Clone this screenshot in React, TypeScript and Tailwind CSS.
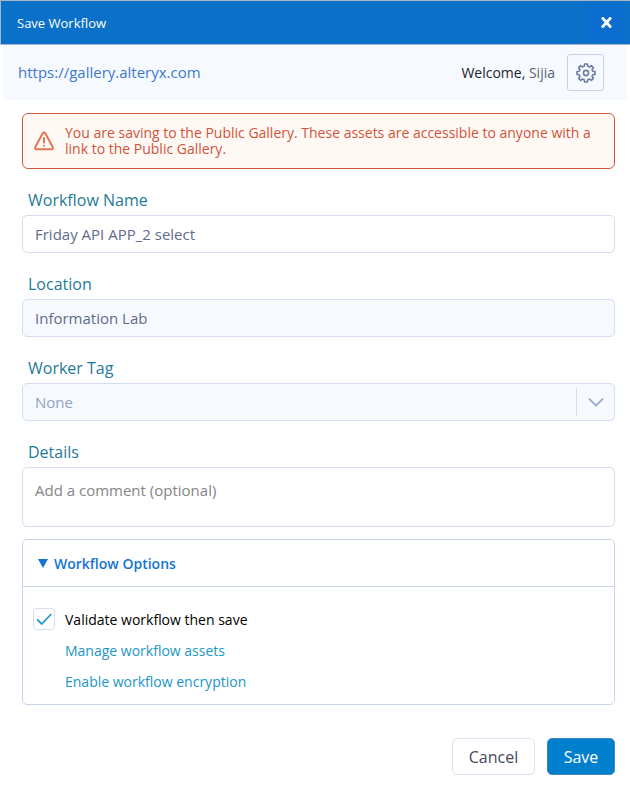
import React, { useState } from "react";

const labelClass = "block pl-1.5 text-[16px] leading-5 text-[#1f7a99]";
const fieldClass =
  "block w-full rounded-[5px] border border-[#d5def0] px-3 text-[15px] outline-none";

// eight rounded teeth around the centre of a 24px box
const gearPoints = Array.from({ length: 8 }, (_, i) =>
  [
    [-15, 7.6],
    [-9, 9.9],
    [9, 9.9],
    [15, 7.6],
  ]
    .map(([angle, radius]) => {
      const a = ((i * 45 + angle) * Math.PI) / 180;
      return `${12 + radius * Math.sin(a)},${12 - radius * Math.cos(a)}`;
    })
    .join(" ")
).join(" ");

const GearIcon: React.FC = () => (
  <svg
    className="size-[22px]"
    viewBox="0 0 24 24"
    fill="none"
    stroke="currentColor"
    strokeWidth="1.8"
    strokeLinejoin="round"
    aria-hidden="true"
  >
    <polygon points={gearPoints} />
    <circle cx="12" cy="12" r="2.8" />
  </svg>
);

const WarningIcon: React.FC = () => (
  <svg
    className="size-[22px] shrink-0 text-[#e4754f]"
    viewBox="0 0 22 22"
    fill="none"
    stroke="currentColor"
    strokeWidth="2"
    strokeLinecap="round"
    strokeLinejoin="round"
    aria-hidden="true"
  >
    <path d="M9.7 3.2 2.2 17.2a1.4 1.4 0 0 0 1.2 2.1h15.2a1.4 1.4 0 0 0 1.2-2.1L12.3 3.2a1.5 1.5 0 0 0-2.6 0Z" />
    <path d="M11 8v4.5M11 15.7v.1" />
  </svg>
);

const App: React.FC = () => {
  const [name, setName] = useState("Friday API APP_2 select");
  const [comment, setComment] = useState("");
  const [validate, setValidate] = useState(true);

  return (
    <div className="min-h-screen bg-white font-['Open_Sans','Noto_Sans',sans-serif]">
      <header className="flex h-[45px] items-center justify-between border border-r-0 border-[#a3b5c6] bg-[#0b70c7] pr-1.5 pl-4 text-white">
        <h1 className="text-[13px] leading-5">Save Workflow</h1>
        <button
          type="button"
          aria-label="Close"
          className="flex h-9 w-9 items-center justify-center bg-[#0b6dd0]"
        >
          <svg
            className="size-[11px]"
            viewBox="0 0 11 11"
            stroke="currentColor"
            strokeWidth="2.8"
            aria-hidden="true"
          >
            <path d="M1 0.5 10 10.5M10 0.5 1 10.5" />
          </svg>
        </button>
      </header>

      <div className="mx-[3px] flex h-[55px] items-center justify-between bg-[#f6faff] pr-[23px] pl-[15px]">
        <a href="#gallery" className="text-[15px] text-[#3f78cc]">
          https://gallery.alteryx.com
        </a>
        <div className="flex items-center gap-3 text-[14px]">
          <span className="text-[#1d222b]">
            Welcome, <span className="text-[#5a6672]">Sijia</span>
          </span>
          <button
            type="button"
            aria-label="Settings"
            className="flex h-[37px] w-[37px] items-center justify-center rounded-[3px] border border-[#c3d0ea] text-[#6c7ea3]"
          >
            <GearIcon />
          </button>
        </div>
      </div>

      <main className="pt-[13px] pr-[15px] pb-3 pl-[22px]">
        <div
          role="alert"
          className="flex items-center gap-2.5 rounded-[6px] border border-[#cf5a3c] bg-[#fff9f6] py-[11px] pr-2 pl-2.5 text-[14px] leading-4 text-[#cf5439]"
        >
          <WarningIcon />
          <p>
            You are saving to the Public Gallery. These assets are accessible to
            anyone with a link to the Public Gallery.
          </p>
        </div>

        <form className="mt-[21px]" onSubmit={(e) => e.preventDefault()}>
          <div className="flex flex-col gap-[21px]">
            <div>
              <label htmlFor="name" className={labelClass}>
                Workflow Name
              </label>
              <input
                id="name"
                type="text"
                value={name}
                onChange={(e) => setName(e.target.value)}
                className={`${fieldClass} mt-[5px] h-[38px] text-[#616b8c]`}
              />
            </div>

            <div>
              <label htmlFor="location" className={labelClass}>
                Location
              </label>
              <input
                id="location"
                type="text"
                readOnly
                value="Information Lab"
                className={`${fieldClass} mt-[5px] h-[38px] bg-[#f6faff] text-[#616b8c]`}
              />
            </div>

            <div>
              <label htmlFor="worker" className={labelClass}>
                Worker Tag
              </label>
              <div className="relative mt-[5px]">
                <select
                  id="worker"
                  disabled
                  className={`${fieldClass} h-[38px] appearance-none bg-[#f6faff] text-[#93a3bf] opacity-100`}
                >
                  <option>None</option>
                </select>
                <span className="pointer-events-none absolute inset-y-[5px] right-0 flex w-[39px] items-center justify-center border-l border-[#d5def0] text-[#9aabcc]">
                  <svg
                    className="h-[9px] w-4"
                    viewBox="0 0 16 9"
                    fill="none"
                    stroke="currentColor"
                    strokeWidth="1.8"
                    strokeLinecap="round"
                    strokeLinejoin="round"
                    aria-hidden="true"
                  >
                    <path d="m1.5 1.2 6.5 6.3 6.5-6.3" />
                  </svg>
                </span>
              </div>
            </div>

            <div>
              <label htmlFor="details" className={labelClass}>
                Details
              </label>
              <textarea
                id="details"
                value={comment}
                onChange={(e) => setComment(e.target.value)}
                placeholder="Add a comment (optional)"
                className={`${fieldClass} mt-[5px] h-[60px] resize-none py-3 leading-5 text-[#616b8c] placeholder:text-[#858585]`}
              />
            </div>
          </div>

          <details
            open
            className="mt-3 rounded-[5px] border border-[#c9d5ef] text-[14px] font-medium"
          >
            <summary className="flex h-[47px] cursor-pointer list-none items-center gap-1.5 border-b border-[#c9d5ef] pl-[15px] font-semibold text-[#1473d4]">
              <svg
                className="h-[9px] w-[10px] fill-current"
                viewBox="0 0 10 9"
                aria-hidden="true"
              >
                <path d="M0 0h10L5 9Z" />
              </svg>
              Workflow Options
            </summary>
            <div className="flex flex-col gap-[11px] pt-[21px] pb-3 pl-2.5">
              <label className="flex items-center gap-2.5 text-black">
                <span className="relative flex size-[22px]">
                  <input
                    type="checkbox"
                    checked={validate}
                    onChange={(e) => setValidate(e.target.checked)}
                    className="peer size-[22px] appearance-none rounded-[4px] border border-[#d5def0]"
                  />
                  <svg
                    className="pointer-events-none absolute inset-0 hidden size-[22px] text-[#2497d3] peer-checked:block"
                    viewBox="0 0 22 22"
                    fill="none"
                    stroke="currentColor"
                    strokeWidth="1.8"
                    aria-hidden="true"
                  >
                    <path d="m4 11.3 4.7 4.7 9.6-10" />
                  </svg>
                </span>
                Validate workflow then save
              </label>
              <a href="#assets" className="pl-8 leading-5 text-[#2196c8]">
                Manage workflow assets
              </a>
              <a href="#encryption" className="pl-8 leading-5 text-[#2196c8]">
                Enable workflow encryption
              </a>
            </div>
          </details>

          <div className="mt-[33px] flex justify-end gap-3 text-[16px]">
            <button
              type="button"
              className="h-[37px] w-[83px] rounded-[5px] border border-[#dbe3f1] text-[#454a57]"
            >
              Cancel
            </button>
            <button
              type="submit"
              className="h-[37px] w-[68px] rounded-[5px] border border-[#3f86c6] bg-[#0080cc] text-white"
            >
              Save
            </button>
          </div>
        </form>
      </main>
    </div>
  );
};

export default App;
